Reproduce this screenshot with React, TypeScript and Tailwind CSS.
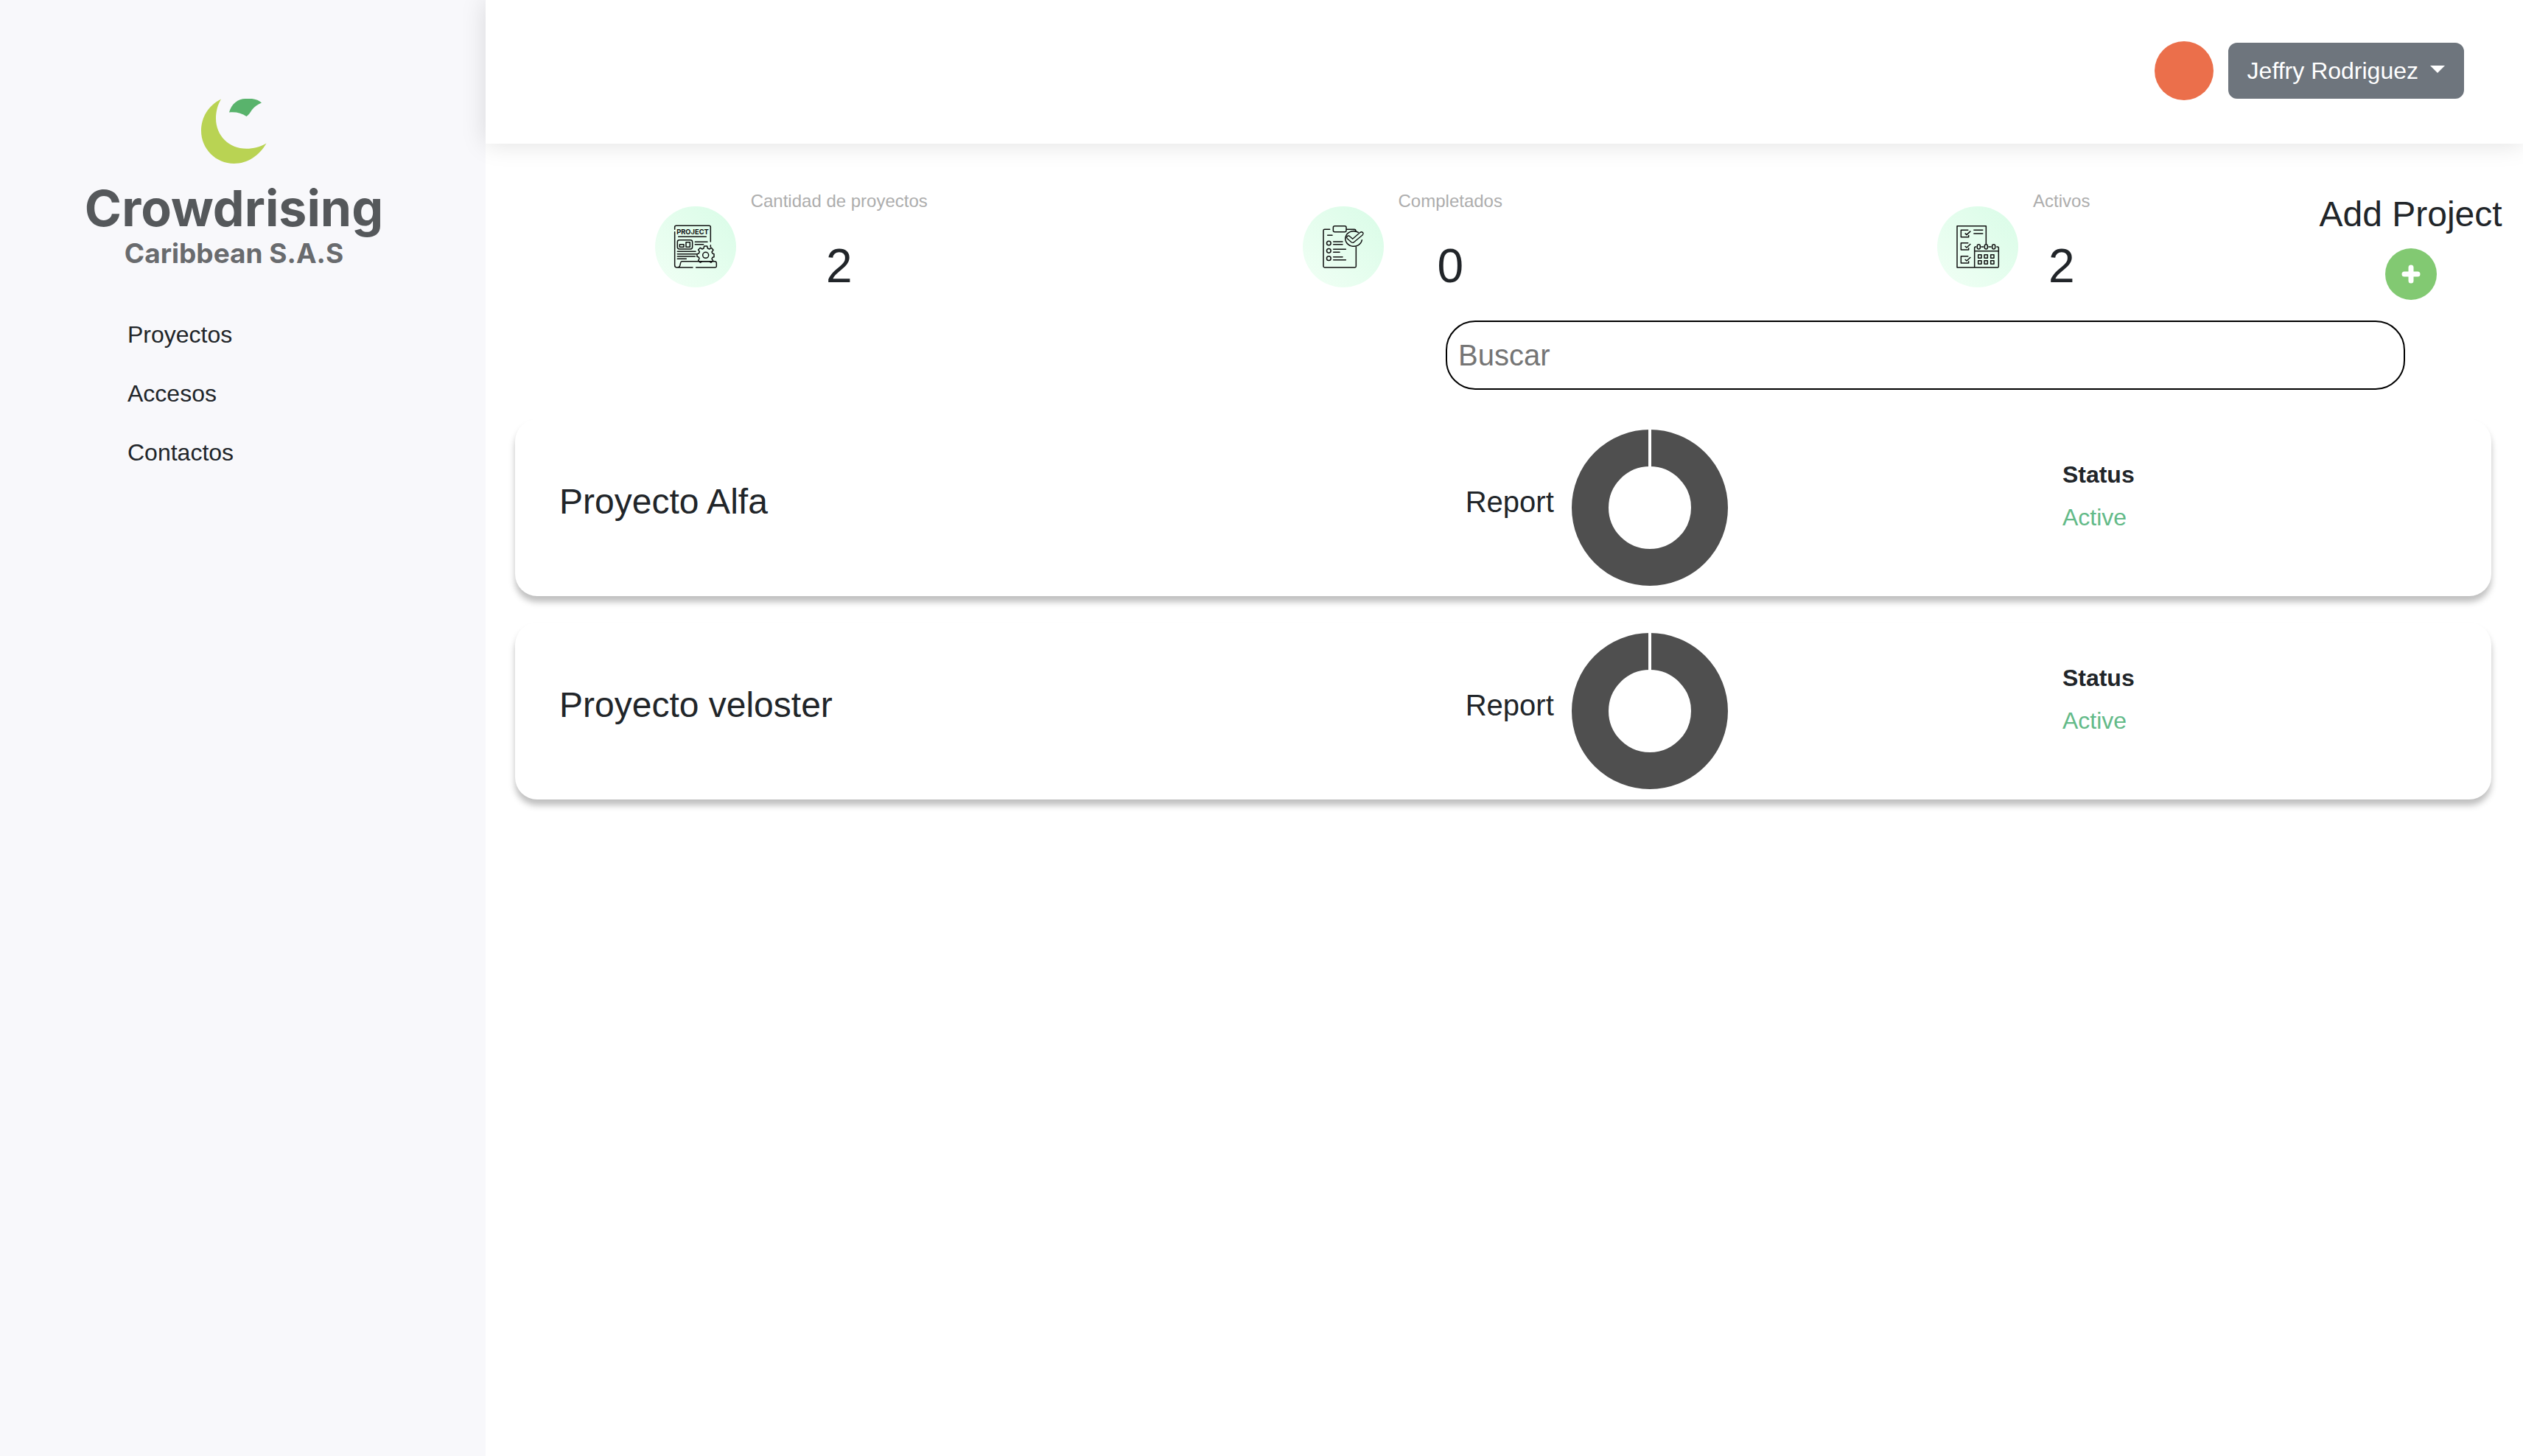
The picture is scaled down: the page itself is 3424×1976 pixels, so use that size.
import type { ReactNode } from "react";

const navItems = ["Proyectos", "Accesos", "Contactos"];

const projects = [
  { name: "Proyecto Alfa", status: "Active" },
  { name: "Proyecto veloster", status: "Active" },
];

function LogoMark() {
  return (
    <svg width="90" height="88" viewBox="0 0 90 88" aria-hidden="true">
      <path
        fill="#b9d353"
        d="M27 0.5C10 9 0 25 0 43.5C0 68 20 88 44.5 88C63 88 79 77 88.5 60.5C80 65.500 71 67.800 61.500 67.800C38 67.800 20 50 20 27C20 17 22.500 8 27 0.500Z"
      />
      <path
        fill="#59b36c"
        d="M38 18.500C41 7 50 0 60 0H69C74 0.500 79 2.500 82 5.500C76 8 72 11 69 15C66.500 19 64.500 22 61.500 24C55 19.500 47 17.500 38 18.500Z"
      />
    </svg>
  );
}

function ProjectIcon() {
  return (
    <svg width="70" height="70" viewBox="-3 0 210 210" fill="none" stroke="#111" strokeWidth="4.500" strokeLinecap="round" strokeLinejoin="round" aria-hidden="true">
      <path d="M17 34V25Q17 19 23 19H157Q163 19 163 25V84M163 98V105M17 44V180Q17 189 26 189H90M104 189H182Q187 189 187 184V172Q187 164 180 164H46Q42 164 41 170L38 182Q36 189 28 189" />
      <text x="90" y="54" textAnchor="middle" fill="#111" stroke="none" fontSize="28" fontWeight="700" fontFamily="Inter, sans-serif">
        PROJECT
      </text>
      <path d="M32 64H145" />
      <rect x="28" y="77" width="61" height="37" rx="8" />
      <path d="M37 95H54V106H37ZM63 86H79V106H63Z" />
      <path d="M100 85H150M100 95H134M28 124H102M28 134H106M28 144H100M28 154H64" />
      <path d="M137 102H149L151 111L158 114L166 109L174 118L168 126L171 132L177 134V146L171 148L168 154L173 161L165 169L157 164L130 164L121 169L113 161L117 153L115 147L108 145V134L115 132L118 125L113 117L121 109L129 114L135 111Z" />
      <circle cx="143" cy="139" r="12" />
    </svg>
  );
}

function ClipboardIcon() {
  return (
    <svg width="70" height="70" viewBox="-6 0 210 210" fill="none" stroke="#111" strokeWidth="4.500" strokeLinecap="round" strokeLinejoin="round" aria-hidden="true">
      <path d="M44 34H23Q18 34 18 39V184Q18 189 23 189H146Q151 189 151 184V106M113 34H144Q150 34 150 42" />
      <rect x="58" y="20" width="53" height="24" rx="6" />
      <path d="M35 58H54M59 84H96M59 95H96M59 115H109M59 127H84M59 146H96M59 158H109" />
      <circle cx="40" cy="90" r="8.500" />
      <circle cx="40" cy="121" r="8.500" />
      <circle cx="40" cy="152" r="8.500" />
      <path d="M160 46A34 31 0 1 0 175 77" />
      <path d="M114 63Q120 57 126 63L137 73L168 46Q174 42 179 47Q182 51 178 56L142 86Q137 90 132 86L115 71Q111 67 114 63Z" strokeWidth="4" />
    </svg>
  );
}

function CalendarIcon() {
  return (
    <svg width="70" height="70" viewBox="3 0 210 210" fill="none" stroke="#111" strokeWidth="4.500" strokeLinejoin="round" aria-hidden="true">
      <path d="M142 96V20H24V189H190Q193 189 193 184V108Q193 105 189 105H184M95 189V108Q95 105 99 105H103M121 105H133M151 105H164M95 122H193" />
      {[49, 101, 155].map((y) => (
        <path key={y} d={`M70 ${y - 12}H40V${y + 16}H71V${y + 8}M56 ${y + 1}L63 ${y + 7}L79 ${y - 8}`} />
      ))}
      <path d="M91 37H130M91 51H130" />
      {[112, 142, 173].map((x) => (
        <rect key={x} x={x - 6} y="95" width="12" height="19" rx="6" />
      ))}
      {[109, 134, 160].map((x) => (
        <g key={x}>
          <rect x={x + 1} y="137" width="13" height="14" />
          <rect x={x + 1} y="161" width="13" height="14" />
        </g>
      ))}
    </svg>
  );
}

function Stat({ icon, label, value }: { icon: ReactNode; label: string; value: number }) {
  return (
    <div className="flex items-start justify-center gap-5">
      <div className="mt-[25px] flex size-[110px] items-center justify-center rounded-full bg-linear-to-bl from-[#d9fce7] to-[#f1fff5]">
        {icon}
      </div>
      <div className="flex flex-col items-center gap-8">
        <span className="text-[24px] leading-[36px] whitespace-nowrap text-[#adadad]">{label}</span>
        <span className="text-[64px] leading-[76px]">{value}</span>
      </div>
    </div>
  );
}

function Donut() {
  return (
    <svg width="212" height="212" viewBox="0 0 212 212" role="img" aria-label="Report chart">
      <circle cx="106" cy="106" r="81" fill="none" stroke="#4f4f4f" strokeWidth="50" />
      <path d="M106 0V52" stroke="#fff" strokeWidth="4" />
    </svg>
  );
}

function ProjectCard({ name, status }: { name: string; status: string }) {
  return (
    <article className="grid h-60 grid-cols-[469fr_309fr_222fr] items-center rounded-[30px] bg-white pl-[60px] shadow-[0_8px_8px_rgba(0,0,0,0.25)]">
      <h2 className="mb-4 text-[48px] leading-[58px]">{name}</h2>
      <div className="flex items-center gap-6">
        <h3 className="mb-4 text-[40px] leading-[48px]">Report</h3>
        <Donut />
      </div>
      <div className="mb-8 flex flex-col gap-[10px] text-[32px] leading-[48px]">
        <span className="font-bold">Status</span>
        <span className="text-[#63ba88]">{status}</span>
      </div>
    </article>
  );
}

export default function App() {
  return (
    <div className="flex min-h-screen bg-white font-['Helvetica_Neue','Liberation_Sans',Arial,sans-serif] text-[#212529]">
      <aside className="w-[659px] shrink-0 bg-[#f8f8fb] pt-[134px]">
        <div className="flex flex-col items-center pr-6 font-[Inter,sans-serif] text-[#55585b]">
          <LogoMark />
          <span className="mt-[26px] text-[68px] leading-[68px] font-bold">Crowdrising</span>
          <span className="mt-[10px] text-[37px] leading-[36px] font-bold text-[#696b6e]">Caribbean S.A.S</span>
        </div>
        <nav className="mt-[52px] flex flex-col pl-[173px] text-[32px] leading-[80px]">
          {navItems.map((item) => (
            <a key={item} href="#">
              {item}
            </a>
          ))}
        </nav>
      </aside>

      <div className="min-w-0 flex-1">
        <header className="relative flex items-center justify-end gap-5 bg-white pt-14 pr-20 pb-[59px] shadow-[0_0_32px_rgba(0,0,0,0.13)]">
          <div className="size-20 rounded-full bg-[#eb6f4b]" />
          <button className="flex items-center gap-4 rounded-xl border-2 border-[#6e757d] bg-[#6e757d] px-6 py-3 text-[32px] leading-[48px] text-white">
            Jeffry Rodriguez
            <span className="mb-1 border-x-[10px] border-t-[10px] border-x-transparent border-t-white" />
          </button>
        </header>

        <main>
          <section className="grid grid-cols-[30%_30%_30%_10%] pt-[60px]">
            <Stat icon={<ProjectIcon />} label="Cantidad de proyectos" value={2} />
            <Stat icon={<ClipboardIcon />} label="Completados" value={0} />
            <Stat icon={<CalendarIcon />} label="Activos" value={2} />
            <div className="mt-[7px] flex w-fit flex-col items-center gap-[17px]">
              <h2 className="text-[48px] leading-[58px] whitespace-nowrap">Add Project</h2>
              <button aria-label="Add Project" className="flex size-[70px] items-center justify-center rounded-full bg-[#82c972]">
                <svg width="26" height="26" viewBox="0 0 26 26" stroke="#fff" strokeWidth="7" strokeLinecap="round" aria-hidden="true">
                  <path d="M13 4V22M4 13H22" />
                </svg>
              </button>
            </div>
          </section>

          <div className="mt-7 flex justify-end pr-40">
            <input
              type="text"
              aria-label="Buscar"
              placeholder="Buscar"
              className="h-[94px] w-[1302px] max-w-full rounded-[40px] border-2 border-black px-[15px] text-[40px] placeholder:text-[#757575]"
            />
          </div>

          <section className="mt-10 flex flex-col gap-9 pr-[43px] pl-10">
            {projects.map((project) => (
              <ProjectCard key={project.name} {...project} />
            ))}
          </section>
        </main>
      </div>
    </div>
  );
}
